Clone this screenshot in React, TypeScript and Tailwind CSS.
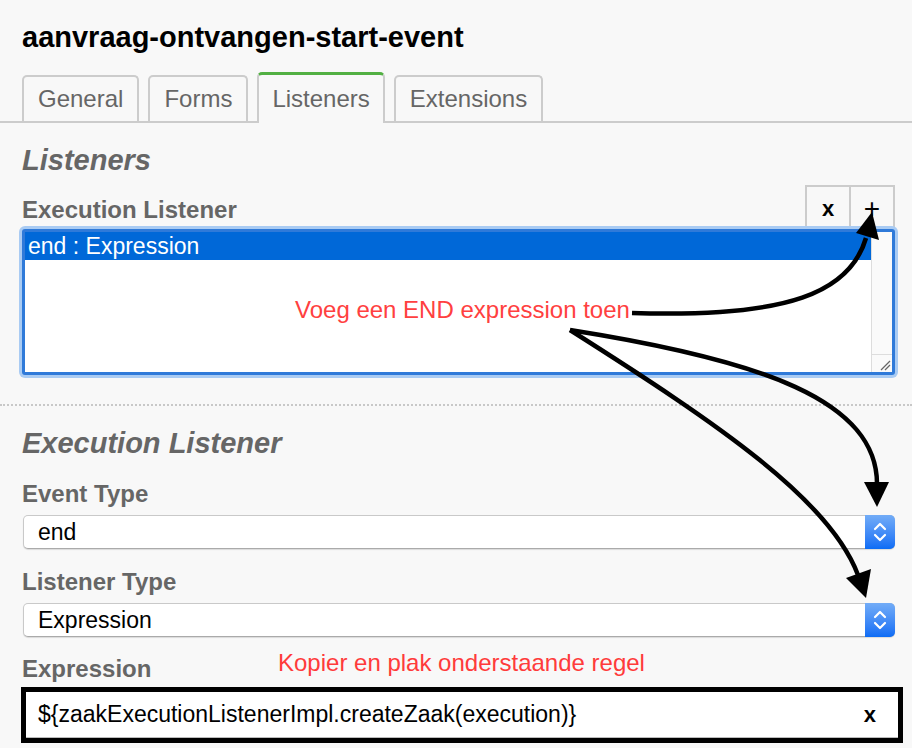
import React from "react";

function Chevrons() {
  return (
    <svg width="16" height="24" viewBox="0 0 16 24" fill="none">
      <path d="M3 9 L8 4 L13 9" stroke="white" strokeWidth="2.2" strokeLinecap="round" strokeLinejoin="round" />
      <path d="M3 15 L8 20 L13 15" stroke="white" strokeWidth="2.2" strokeLinecap="round" strokeLinejoin="round" />
    </svg>
  );
}

function Select({ value }: { value: string }) {
  return (
    <div className="ml-[1px] flex h-[34px] items-stretch rounded-[5px] border border-[#c9c9c9] border-b-[#aaaaaa] bg-white shadow-[0_1px_1px_rgba(0,0,0,0.12)]">
      <div className="flex flex-1 items-center pl-[14px] text-[23px] text-black">{value}</div>
      <div className="-my-[1px] -mr-[1px] flex w-[30px] items-center justify-center rounded-r-[5px] bg-gradient-to-b from-[#72acf7] to-[#0a6cf5]">
        <Chevrons />
      </div>
    </div>
  );
}

export default function App() {
  const tabs = ["General", "Forms", "Listeners", "Extensions"];
  return (
    <div className="relative h-[748px] w-[912px] overflow-hidden bg-[#f8f8f8] font-['Liberation_Sans',Arial,sans-serif]">
      <div className="px-[22px] pt-[21px]">
        <h1 className="text-[29px] font-bold leading-[33px] text-black">aanvraag-ontvangen-start-event</h1>
      </div>

      <div className="mt-[20px] flex h-[49px] items-end gap-[9px] border-b-2 border-[#cccccc] px-[22px]">
        {tabs.map((t) =>
          t === "Listeners" ? (
            <div
              key={t}
              className="-mb-[2px] flex h-[51px] items-center rounded-t-[5px] border-x-2 border-t-[3px] border-x-[#cccccc] border-t-[#52b043] bg-[#f8f8f8] px-[13px] text-[24px] text-[#666666]"
            >
              {t}
            </div>
          ) : (
            <div
              key={t}
              className="flex h-[46px] items-center rounded-t-[5px] border-x-2 border-t-2 border-[#cccccc] px-[14px] text-[24px] text-[#666666]"
            >
              {t}
            </div>
          )
        )}
      </div>

      <div className="pl-[22px] pr-[17px]">
        <h2 className="mt-[21px] text-[29px] font-bold italic leading-[33px] text-[#666666]">Listeners</h2>

        <div className="mt-[8px] flex h-[45px] items-end justify-between">
          <div className="mb-[6px] text-[24px] font-bold leading-[28px] text-[#666666]">Execution Listener</div>
          <div className="flex h-[45px]">
            <div className="flex w-[46px] items-center justify-center border-2 border-b-0 border-[#cccccc] text-[22px] font-bold leading-none text-black">
              x
            </div>
            <div className="-ml-[2px] flex w-[46px] items-center justify-center border-2 border-b-0 border-[#cccccc] text-[28px] leading-none text-black">
              +
            </div>
          </div>
        </div>

        <div className="relative z-10 -mt-[1px] flex h-[146px] rounded-[3px] border-[3px] border-[#2f7ad9] bg-white shadow-[0_0_0_3px_#a9cbf3]">
          <div className="flex-1">
            <div className="flex h-[28px] items-center bg-[#0068d8] pl-[3px] text-[23px] leading-[28px] text-white">
              end : Expression
            </div>
          </div>
          <div className="flex w-[21px] flex-col border-l border-[#dddddd] bg-[#fafafa]">
            <div className="flex-1" />
            <div className="relative h-[18px] border-t border-[#dddddd]">
              <svg className="absolute bottom-[1px] right-[1px]" width="12" height="12" viewBox="0 0 12 12">
                <path d="M2 11 L11 2" stroke="#666" strokeWidth="1.3" />
                <path d="M6 11 L11 6" stroke="#666" strokeWidth="1.3" />
              </svg>
            </div>
          </div>
        </div>
      </div>

      <div className="mt-[29px] border-t-2 border-dotted border-[#c8c8c8]" />

      <div className="pl-[22px] pr-[17px]">
        <h2 className="mt-[21px] text-[29px] font-bold italic leading-[33px] text-[#666666]">Execution Listener</h2>

        <div className="mt-[20px] text-[24px] font-bold leading-[28px] text-[#666666]">Event Type</div>
        <div className="mt-[7px]">
          <Select value="end" />
        </div>

        <div className="mt-[19px] text-[24px] font-bold leading-[28px] text-[#666666]">Listener Type</div>
        <div className="mt-[7px]">
          <Select value="Expression" />
        </div>

        <div className="mt-[18px] text-[24px] font-bold leading-[28px] text-[#666666]">Expression</div>
        <div className="-ml-[1px] -mr-[8px] mt-[4px] border-[5px] border-black">
          <div className="flex h-[46px] items-center justify-between border-b border-[#bbbbbb] bg-white pl-[12px] pr-[22px]">
            <span className="text-[23px] text-black">{"${zaakExecutionListenerImpl.createZaak(execution)}"}</span>
            <span className="text-[22px] font-bold text-black">x</span>
          </div>
        </div>
      </div>

      {/* annotations */}
      <div className="absolute left-[295px] top-[296px] z-20 text-[24px] leading-[28px] text-[#ff4040]">
        Voeg een END expression toen
      </div>
      <div className="absolute left-[278px] top-[649px] z-20 text-[24px] leading-[28px] text-[#ff3b3b]">
        Kopier en plak onderstaande regel
      </div>

      <svg className="pointer-events-none absolute left-0 top-0 z-30" width="912" height="748" viewBox="0 0 912 748" fill="none">
        <path d="M632 313 C790 318 850 292 866 238" stroke="black" strokeWidth="4.5" />
        <polygon points="872,212 856,233 879,240" fill="black" />
        <path d="M570 330 C760 360 878 400 877 485" stroke="black" strokeWidth="4.5" />
        <polygon points="877,507 864,482 889,482" fill="black" />
        <path d="M570 330 C720 425 830 500 858 575" stroke="black" strokeWidth="4.5" />
        <polygon points="866,598 846,578 871,569" fill="black" />
      </svg>
    </div>
  );
}
